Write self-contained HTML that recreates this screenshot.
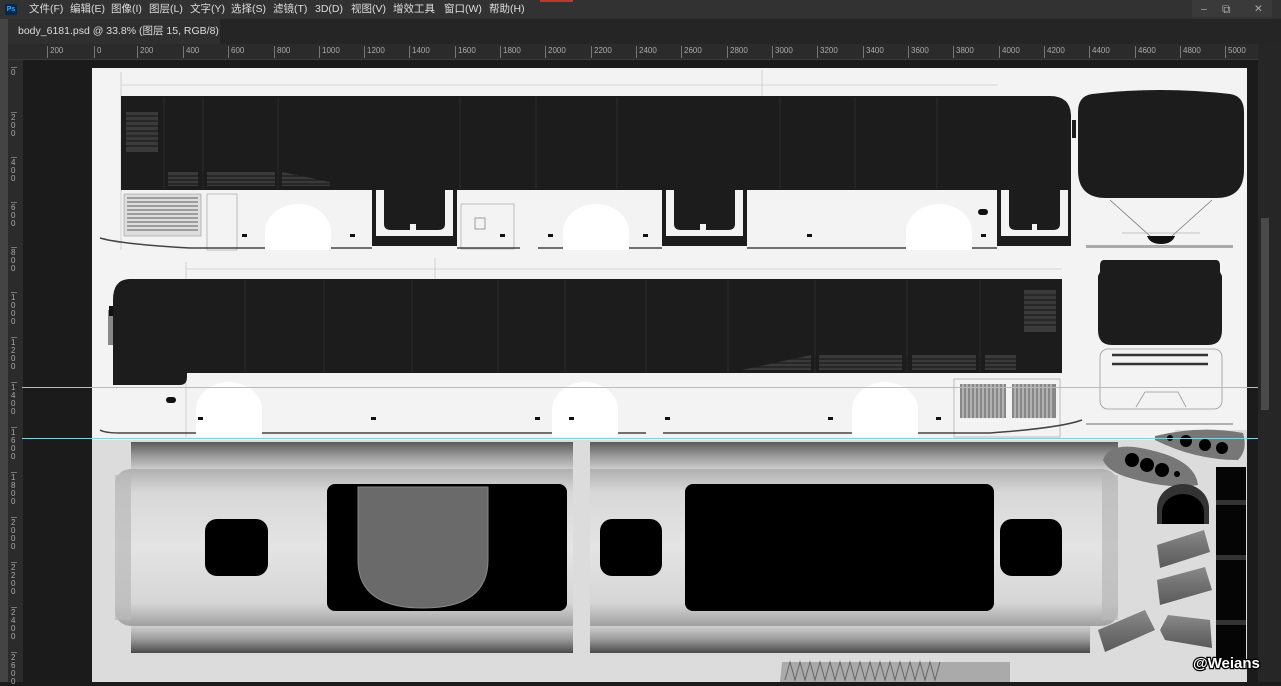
<!DOCTYPE html>
<html><head><meta charset="utf-8"><style>
*{margin:0;padding:0;box-sizing:border-box}
body{width:1281px;height:682px;overflow:hidden;background:#1b1b1b;position:relative;font-family:"Liberation Sans","Noto Sans CJK SC",sans-serif}
.abs{position:absolute}
#menu{left:0;top:0;width:1281px;height:19px;background:#323232;color:#ddd;font-size:10.5px;line-height:19px}
#menu span{position:absolute;top:0}
#tabbar{left:0;top:19px;width:1281px;height:25px;background:#252525}
#tab{left:8px;top:19px;width:212px;height:25px;background:#2f2f2f;color:#ddd;font-size:10.5px;line-height:25px;padding-left:10px}
#hruler{left:8px;top:44px;width:1250px;height:16px;background:#2b2b2b;border-bottom:1px solid #3a3a3a}
#hruler span{position:absolute;top:2px;font-size:8px;color:#aaa;border-left:1px solid #777;padding-left:2px;height:12px;line-height:9px}
#vruler{left:8px;top:60px;width:15px;height:622px;background:#2b2b2b}
#vruler span{position:absolute;left:3px;font-size:8px;color:#aaa;width:6px;line-height:8px;border-top:1px solid #777;padding-top:1px}
</style></head><body>
<div class="abs" id="menu">
<span style="left:5px;top:4px;width:12px;height:11px;background:#0b2747;border-radius:1px;color:#31a8ff;font-size:7px;line-height:11px;text-align:center;font-weight:bold">Ps</span>
<span style="left:29px">文件(F)</span><span style="left:70px">编辑(E)</span><span style="left:111px">图像(I)</span><span style="left:149px">图层(L)</span><span style="left:190px">文字(Y)</span><span style="left:231px">选择(S)</span><span style="left:273px">滤镜(T)</span><span style="left:315px">3D(D)</span><span style="left:351px">视图(V)</span><span style="left:393px">增效工具</span><span style="left:444px">窗口(W)</span><span style="left:489px">帮助(H)</span>
<span style="left:540px;top:0;width:33px;height:2px;background:#c0392b"></span>
<span style="left:1192px;top:0;width:80px;height:17px;background:#3a3a3a"></span>
<span style="left:1201px;color:#aaa">–</span><span style="left:1222px;color:#aaa;font-size:12px">⧉</span><span style="left:1254px;color:#aaa">✕</span>
</div>
<div class="abs" id="tabbar"></div>
<div class="abs" id="tab">body_6181.psd @ 33.8% (图层 15, RGB/8) <span style="color:#888;margin-left:4px">×</span></div>
<div class="abs" style="left:0;top:19px;width:8px;height:663px;background:#444"></div>
<div class="abs" id="hruler">
<span style="left:39px">200</span><span style="left:86px">0</span><span style="left:129px">200</span><span style="left:175px">400</span><span style="left:220px">600</span><span style="left:266px">800</span><span style="left:311px">1000</span><span style="left:356px">1200</span><span style="left:401px">1400</span><span style="left:447px">1600</span><span style="left:492px">1800</span><span style="left:537px">2000</span><span style="left:583px">2200</span><span style="left:628px">2400</span><span style="left:673px">2600</span><span style="left:719px">2800</span><span style="left:764px">3000</span><span style="left:809px">3200</span><span style="left:855px">3400</span><span style="left:900px">3600</span><span style="left:945px">3800</span><span style="left:991px">4000</span><span style="left:1036px">4200</span><span style="left:1081px">4400</span><span style="left:1127px">4600</span><span style="left:1172px">4800</span><span style="left:1217px">5000</span>
</div>
<div class="abs" id="vruler">
<span style="top:7px">0</span><span style="top:52px">2<br>0<br>0</span><span style="top:97px">4<br>0<br>0</span><span style="top:142px">6<br>0<br>0</span><span style="top:187px">8<br>0<br>0</span><span style="top:232px">1<br>0<br>0<br>0</span><span style="top:277px">1<br>2<br>0<br>0</span><span style="top:322px">1<br>4<br>0<br>0</span><span style="top:367px">1<br>6<br>0<br>0</span><span style="top:412px">1<br>8<br>0<br>0</span><span style="top:457px">2<br>0<br>0<br>0</span><span style="top:502px">2<br>2<br>0<br>0</span><span style="top:547px">2<br>4<br>0<br>0</span><span style="top:592px">2<br>6<br>0<br>0</span>
</div>
<div class="abs" style="left:1258px;top:44px;width:23px;height:638px;background:#262626"></div>
<div class="abs" style="left:1261px;top:218px;width:8px;height:192px;background:#4a4a4a"></div>

<svg class="abs" style="left:0;top:0" width="1281" height="682" viewBox="0 0 1281 682">
<defs>
<linearGradient id="pv" x1="0" y1="0" x2="0" y2="1"><stop offset="0" stop-color="#5a5a5a"/><stop offset=".5" stop-color="#9a9a9a"/><stop offset="1" stop-color="#cfcfcf"/></linearGradient>
<linearGradient id="pv2" x1="0" y1="0" x2="0" y2="1"><stop offset="0" stop-color="#d0d0d0"/><stop offset=".5" stop-color="#9a9a9a"/><stop offset="1" stop-color="#4a4a4a"/></linearGradient>
<linearGradient id="midv" x1="0" y1="0" x2="0" y2="1"><stop offset="0" stop-color="#b0b0b0"/><stop offset=".15" stop-color="#d8d8d8"/><stop offset=".5" stop-color="#e4e4e4"/><stop offset=".85" stop-color="#d6d6d6"/><stop offset="1" stop-color="#a0a0a0"/></linearGradient>
<linearGradient id="seg" x1="0" y1="0" x2="0" y2="1"><stop offset="0" stop-color="#8a8a8a"/><stop offset=".5" stop-color="#707070"/><stop offset="1" stop-color="#5a5a5a"/></linearGradient>
</defs>
<rect x="92" y="68" width="1155" height="614" fill="#f3f3f3"/>
<line x1="121" y1="72" x2="121" y2="250" stroke="#bbb" stroke-width=".6"/>
<line x1="121" y1="85" x2="998" y2="85" stroke="#bbb" stroke-width=".6"/>
<line x1="762" y1="70" x2="762" y2="96" stroke="#bbb" stroke-width=".6"/>
<path d="M121 96 H1050 Q1070 96 1071 115 V190 H121 Z" fill="#1c1c1c"/>
<g stroke="#2c2c2c" stroke-width="1"><line x1="164" y1="97" x2="164" y2="189"/><line x1="203" y1="97" x2="203" y2="189"/><line x1="278" y1="97" x2="278" y2="189"/><line x1="460" y1="97" x2="460" y2="189"/><line x1="536" y1="97" x2="536" y2="189"/><line x1="617" y1="97" x2="617" y2="189"/><line x1="780" y1="97" x2="780" y2="189"/><line x1="855" y1="97" x2="855" y2="189"/><line x1="937" y1="97" x2="937" y2="189"/></g>
<g fill="#3a3a3a"><rect x="126" y="112" width="32" height="40"/><rect x="168" y="172" width="30" height="14"/><rect x="207" y="172" width="68" height="14"/><path d="M282 172 L330 182 V186 H282 Z"/></g>
<g stroke="#1c1c1c" stroke-width="1.3"><line x1="126" y1="116" x2="158" y2="116"/><line x1="126" y1="121" x2="158" y2="121"/><line x1="126" y1="126" x2="158" y2="126"/><line x1="126" y1="131" x2="158" y2="131"/><line x1="126" y1="136" x2="158" y2="136"/><line x1="126" y1="141" x2="158" y2="141"/><line x1="126" y1="146" x2="158" y2="146"/><line x1="168" y1="176" x2="330" y2="176"/><line x1="168" y1="180" x2="330" y2="180"/><line x1="168" y1="184" x2="330" y2="184"/></g>
<rect x="124" y="194" width="77" height="42" fill="#ddd" stroke="#999" stroke-width=".6"/>
<g stroke="#777" stroke-width="1.2"><line x1="127" y1="198" x2="198" y2="198"/><line x1="127" y1="202" x2="198" y2="202"/><line x1="127" y1="206" x2="198" y2="206"/><line x1="127" y1="210" x2="198" y2="210"/><line x1="127" y1="214" x2="198" y2="214"/><line x1="127" y1="218" x2="198" y2="218"/><line x1="127" y1="222" x2="198" y2="222"/><line x1="127" y1="226" x2="198" y2="226"/><line x1="127" y1="230" x2="198" y2="230"/></g>
<rect x="207" y="194" width="30" height="56" fill="none" stroke="#999" stroke-width=".6"/>
<rect x="461" y="204" width="53" height="45" fill="none" stroke="#999" stroke-width=".6"/>
<rect x="475" y="218" width="10" height="11" fill="none" stroke="#888" stroke-width=".8"/>
<g fill="#fff"><path d="M265 250 V232 A33 28 0 0 1 331 232 V250Z"/><path d="M563 250 V232 A33 28 0 0 1 629 232 V250Z"/><path d="M906 250 V232 A33 28 0 0 1 972 232 V250Z"/></g>
<g fill="#1c1c1c">
<path d="M372 190 H457 V246 H372Z"/><path d="M662 190 H747 V246 H662Z"/><path d="M997 190 H1071 V246 H997Z"/>
</g>
<g fill="#f3f3f3"><path d="M376 190 V236 H453 V190 H445 V224 Q445 230 438 230 H391 Q384 230 384 224 V190Z"/><path d="M666 190 V236 H743 V190 H735 V224 Q735 230 728 230 H681 Q674 230 674 224 V190Z"/><path d="M1001 190 V236 H1068 V190 H1060 V224 Q1060 230 1053 230 H1016 Q1009 230 1009 224 V190Z"/>
<rect x="410" y="224" width="6" height="12"/><rect x="700" y="224" width="6" height="12"/><rect x="1032" y="224" width="5" height="12"/></g>
<path d="M100 238 Q120 244 190 248" stroke="#444" fill="none" stroke-width="1.5"/>
<g stroke="#444" stroke-width="1.5"><line x1="190" y1="248" x2="265" y2="248"/><line x1="331" y1="248" x2="372" y2="248"/><line x1="457" y1="248" x2="520" y2="248"/><line x1="538" y1="248" x2="563" y2="248"/><line x1="629" y1="248" x2="662" y2="248"/><line x1="747" y1="248" x2="906" y2="248"/><line x1="972" y1="248" x2="997" y2="248"/></g>
<g fill="#111"><rect x="242" y="234" width="5" height="3"/><rect x="350" y="234" width="5" height="3"/><rect x="500" y="234" width="5" height="3"/><rect x="548" y="234" width="5" height="3"/><rect x="643" y="234" width="5" height="3"/><rect x="807" y="234" width="5" height="3"/><rect x="981" y="234" width="5" height="3"/><rect x="978" y="209" width="10" height="6" rx="3"/></g>
<!-- front view -->
<path d="M1092 94 Q1160 86 1230 94 Q1244 96 1244 112 V170 Q1244 198 1216 198 H1106 Q1078 198 1078 170 V112 Q1078 96 1092 94Z" fill="#1c1c1c"/>
<path d="M1072 120 h4 v18 h-4z" fill="#1c1c1c"/>
<path d="M1110 200 L1150 236 M1212 200 L1172 236" stroke="#777" stroke-width=".8" fill="none"/>
<line x1="1122" y1="233" x2="1200" y2="233" stroke="#999" stroke-width=".6"/>
<path d="M1147 236 H1175 Q1172 244 1161 244 Q1150 244 1147 236Z" fill="#111"/>
<rect x="1086" y="245" width="147" height="3" fill="#aaa"/>
<!-- middle section -->
<line x1="186" y1="262" x2="186" y2="437" stroke="#bbb" stroke-width=".6"/>
<line x1="186" y1="269" x2="1062" y2="269" stroke="#bbb" stroke-width=".6"/>
<line x1="435" y1="258" x2="435" y2="279" stroke="#bbb" stroke-width=".6"/>
<path d="M130 279 H1062 V373 H187 V377 Q187 385 180 385 H113 V300 Q113 279 130 279Z" fill="#1c1c1c"/>
<rect x="108" y="310" width="5" height="35" fill="#888"/><rect x="109" y="306" width="4" height="10" fill="#111"/>
<g stroke="#2c2c2c" stroke-width="1"><line x1="245" y1="280" x2="245" y2="372"/><line x1="324" y1="280" x2="324" y2="372"/><line x1="412" y1="280" x2="412" y2="372"/><line x1="498" y1="280" x2="498" y2="372"/><line x1="565" y1="280" x2="565" y2="372"/><line x1="646" y1="280" x2="646" y2="372"/><line x1="728" y1="280" x2="728" y2="372"/><line x1="815" y1="280" x2="815" y2="372"/><line x1="907" y1="280" x2="907" y2="372"/><line x1="980" y1="280" x2="980" y2="372"/></g>
<g fill="#3a3a3a"><path d="M742 370 L811 355 V370Z"/><rect x="819" y="355" width="83" height="15"/><rect x="912" y="355" width="64" height="15"/><rect x="985" y="355" width="31" height="15"/><rect x="1024" y="290" width="32" height="42"/></g>
<g stroke="#1c1c1c" stroke-width="1.3"><line x1="742" y1="359" x2="1016" y2="359"/><line x1="742" y1="363" x2="1016" y2="363"/><line x1="742" y1="367" x2="1016" y2="367"/><line x1="1024" y1="295" x2="1056" y2="295"/><line x1="1024" y1="300" x2="1056" y2="300"/><line x1="1024" y1="305" x2="1056" y2="305"/><line x1="1024" y1="310" x2="1056" y2="310"/><line x1="1024" y1="315" x2="1056" y2="315"/><line x1="1024" y1="320" x2="1056" y2="320"/><line x1="1024" y1="325" x2="1056" y2="325"/></g>
<g fill="#fff"><path d="M196 437 V410 A33 28 0 0 1 262 410 V437Z"/><path d="M552 437 V410 A33 28 0 0 1 618 410 V437Z"/><path d="M852 437 V410 A33 28 0 0 1 918 410 V437Z"/></g>
<rect x="954" y="379" width="106" height="58" fill="none" stroke="#999" stroke-width=".6"/>
<rect x="960" y="384" width="46" height="34" fill="#888"/><rect x="1012" y="384" width="44" height="34" fill="#888"/>
<g stroke="#ddd" stroke-width="1"><line x1="963" y1="384" x2="963" y2="418"/><line x1="967" y1="384" x2="967" y2="418"/><line x1="971" y1="384" x2="971" y2="418"/><line x1="975" y1="384" x2="975" y2="418"/><line x1="979" y1="384" x2="979" y2="418"/><line x1="983" y1="384" x2="983" y2="418"/><line x1="987" y1="384" x2="987" y2="418"/><line x1="991" y1="384" x2="991" y2="418"/><line x1="995" y1="384" x2="995" y2="418"/><line x1="999" y1="384" x2="999" y2="418"/><line x1="1003" y1="384" x2="1003" y2="418"/><line x1="1015" y1="384" x2="1015" y2="418"/><line x1="1019" y1="384" x2="1019" y2="418"/><line x1="1023" y1="384" x2="1023" y2="418"/><line x1="1027" y1="384" x2="1027" y2="418"/><line x1="1031" y1="384" x2="1031" y2="418"/><line x1="1035" y1="384" x2="1035" y2="418"/><line x1="1039" y1="384" x2="1039" y2="418"/><line x1="1043" y1="384" x2="1043" y2="418"/><line x1="1047" y1="384" x2="1047" y2="418"/><line x1="1051" y1="384" x2="1051" y2="418"/></g>
<g stroke="#444" stroke-width="1.5"><path d="M100 430 Q105 433 120 433 H196" fill="none"/><line x1="262" y1="433" x2="552" y2="433"/><line x1="618" y1="433" x2="646" y2="433"/><line x1="663" y1="433" x2="852" y2="433"/><path d="M918 433 H990 Q1060 428 1082 420" fill="none"/></g>
<g fill="#111"><rect x="198" y="417" width="5" height="3"/><rect x="371" y="417" width="5" height="3"/><rect x="535" y="417" width="5" height="3"/><rect x="569" y="417" width="5" height="3"/><rect x="665" y="417" width="5" height="3"/><rect x="828" y="417" width="5" height="3"/><rect x="936" y="417" width="5" height="3"/><rect x="166" y="397" width="10" height="6" rx="3"/></g>
<!-- rear view -->
<path d="M1104 260 H1216 Q1220 260 1220 266 V272 L1222 276 V330 Q1222 345 1208 345 H1112 Q1098 345 1098 330 V276 L1100 272 V266 Q1100 260 1104 260Z" fill="#1c1c1c"/>
<rect x="1100" y="349" width="122" height="60" rx="8" fill="none" stroke="#999" stroke-width=".8"/>
<line x1="1112" y1="355" x2="1208" y2="355" stroke="#333" stroke-width="2.5"/><line x1="1112" y1="364" x2="1208" y2="364" stroke="#333" stroke-width="2.5"/>
<path d="M1136 407 L1145 392 H1178 L1186 407" stroke="#999" fill="none" stroke-width=".8"/>
<line x1="1086" y1="424" x2="1233" y2="424" stroke="#999" stroke-width="1.5"/>
<!-- bottom section -->
<rect x="92" y="440" width="1155" height="242" fill="#dcdcdc"/>
<rect x="1175" y="430" width="72" height="12" fill="#dcdcdc"/>
<rect x="131" y="442" width="442" height="28" fill="url(#pv)"/>
<rect x="131" y="626" width="442" height="27" fill="url(#pv2)"/>
<path d="M133 469 H573 V626 H133 Q115 626 115 608 V487 Q115 469 133 469Z" fill="url(#midv)"/>
<rect x="115" y="475" width="16" height="145" fill="#b8b8b8" opacity=".7"/>
<rect x="590" y="442" width="528" height="28" fill="url(#pv)"/>
<rect x="590" y="626" width="500" height="27" fill="url(#pv2)"/>
<path d="M590 469 H1100 Q1118 469 1118 487 V608 Q1118 626 1100 626 H590Z" fill="url(#midv)"/>
<rect x="1102" y="475" width="16" height="145" fill="#b8b8b8" opacity=".7"/>
<rect x="573" y="440" width="17" height="215" fill="#dcdcdc"/>
<rect x="205" y="519" width="63" height="57" rx="12" fill="#000"/>
<rect x="327" y="484" width="240" height="127" rx="8" fill="#000"/>
<path d="M358 487 H488 V560 Q488 608 423 608 Q358 608 358 560Z" fill="#6a6a6a" stroke="#888" stroke-width="1"/>
<rect x="600" y="519" width="62" height="57" rx="12" fill="#000"/>
<rect x="685" y="484" width="309" height="127" rx="8" fill="#000"/>
<rect x="1000" y="519" width="62" height="57" rx="12" fill="#000"/>
<!-- right parts -->
<path d="M1103 460 Q1110 440 1150 450 Q1195 460 1198 485 Q1170 490 1130 478 Q1108 472 1103 460Z" fill="#777"/>
<g fill="#000"><circle cx="1132" cy="460" r="7"/><circle cx="1147" cy="465" r="7"/><circle cx="1162" cy="470" r="7"/><circle cx="1177" cy="474" r="3"/></g>
<path d="M1155 436 Q1200 425 1243 433 Q1248 450 1238 460 Q1195 460 1155 440Z" fill="#777"/>
<g fill="#000"><circle cx="1186" cy="441" r="6"/><circle cx="1205" cy="445" r="6"/><circle cx="1222" cy="448" r="6"/><circle cx="1170" cy="438" r="3"/></g>
<path d="M1157 524 V508 A26 24 0 0 1 1209 508 V524Z" fill="#333"/>
<path d="M1162 524 V512 A21 18 0 0 1 1204 512 V524Z" fill="#000"/>
<path d="M1157 545 L1204 530 L1210 552 L1160 568Z" fill="url(#seg)"/>
<path d="M1157 580 L1205 567 L1212 590 L1160 605Z" fill="url(#seg)"/>
<path d="M1098 630 L1145 610 L1155 630 L1105 652Z" fill="url(#seg)"/>
<path d="M1160 630 L1168 615 L1210 620 L1212 648 L1165 640Z" fill="url(#seg)"/>
<rect x="1216" y="467" width="30" height="200" fill="#050505"/>
<g fill="#333"><rect x="1216" y="500" width="30" height="5"/><rect x="1216" y="555" width="30" height="5"/><rect x="1216" y="620" width="30" height="5"/></g>
<path d="M780 682 L782 662 L1010 662 L1010 682Z" fill="#aaa"/>
<g stroke="#666" stroke-width="1"><path d="M785 680 L790 662 L795 680 L800 662 L805 680 L810 662 L815 680 L820 662 L825 680 L830 662 L835 680 L840 662 L845 680 L850 662 L855 680 L860 662 L865 680 L870 662 L875 680 L880 662 L885 680 L890 662 L895 680 L900 662 L905 680 L910 662 L915 680 L920 662 L925 680 L930 662 L935 680 L940 662" fill="none"/></g>
<line x1="22" y1="387.5" x2="1258" y2="387.5" stroke="#7fd4d8" stroke-width="1"/>
<line x1="22" y1="438.5" x2="1258" y2="438.5" stroke="#7fd4d8" stroke-width="1"/>
<text x="1193" y="668" font-family="Liberation Sans, sans-serif" font-size="15" font-weight="bold" fill="#fff" stroke="#000" stroke-width="2.5" paint-order="stroke">@Weians</text>
</svg>
</body></html>
